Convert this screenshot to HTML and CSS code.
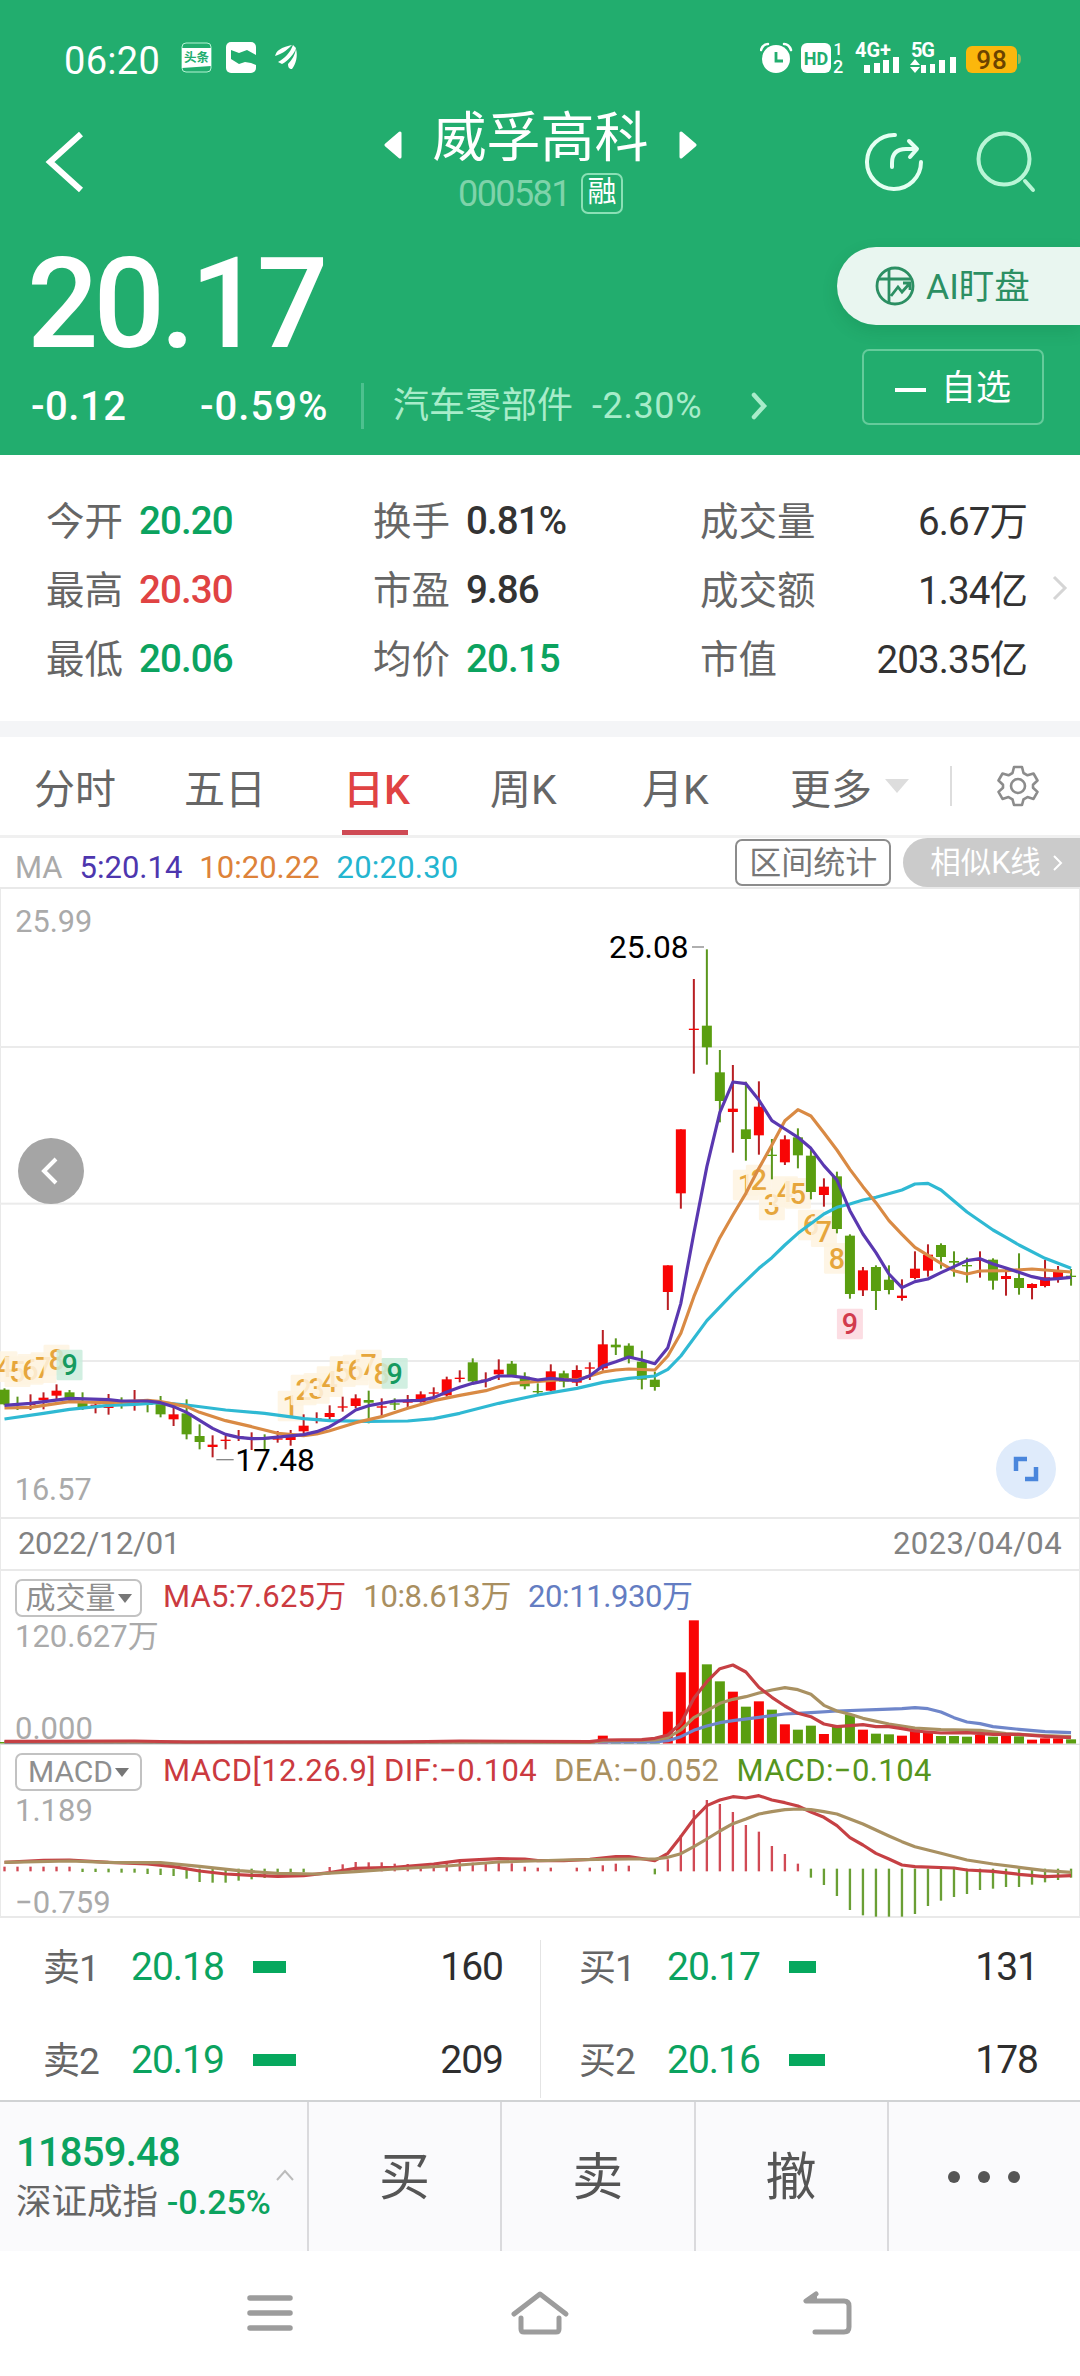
FILE: index.html
```html
<!DOCTYPE html>
<html lang="zh-CN">
  <head>
    <meta charset="UTF-8" />
    <meta name="viewport" content="width=device-width, initial-scale=1.0" />
    <title>威孚高科 000581</title>
    <link rel="stylesheet" href="styles.css">
    <script src="main.js" defer></script>
  </head>
  <body>
    <header class="header">
      <div class="status">
        <span class="clock">06:20</span>
        <svg class="status-left" width="120" height="32" viewBox="0 0 120 32" fill="#fff">
          <rect x="1" y="1" width="29" height="29" rx="4" fill="none" stroke="#b5f3d4" />
          <path d="M1 6H30V24L1 26Z" />
          <text x="15.5" y="20" font-size="12.500" font-weight="700" text-anchor="middle" fill="#22ad6e">头条</text>
          <rect x="45" y="0" width="30" height="31" rx="5" />
          <path d="M50 8l8 3 8-3 9 5v10l-5-2-6-1-6 2-8-5z" fill="#22ad6e" />
          <path d="M94 14c1-3 2-5 4-6 4-3 9-4 13-5-3 3-9 9-17 11zM97 20c7-4 12-9 15-17l3 3c-1 5-8 13-14 16zM107 22c4-4 7-9 8-15 2 7 0 15-4 20-3 0-4-2-4-5z" />
        </svg>
        <svg class="status-right" width="262" height="44" viewBox="0 -8 262 44" fill="#fff">
          <circle cx="16" cy="17" r="14" />
          <path d="M1 8Q3 2 8 2M31 8Q29 2 24 2" fill="none" stroke="#fff" stroke-width="2.5" stroke-linecap="round" />
          <path d="M16 10v9h7" fill="none" stroke="#22ad6e" stroke-width="2.8" />
          <rect x="41" y="1" width="30" height="30" rx="6" />
          <text x="56" y="23" font-size="18" font-weight="700" text-anchor="middle" fill="#22ad6e">HD</text>
          <text x="78" y="13" font-size="16" font-weight="500" text-anchor="middle">1</text>
          <text x="78" y="31" font-size="18" font-weight="500" text-anchor="middle">2</text>
          <text x="95" y="15" font-size="20" font-weight="700" textLength="36">4G+</text>
          <path d="M104 23h6v8h-6zM114 21h6v10h-6zM123 18h6v13h-6zM133 15h6v16h-6z" />
          <text x="151" y="15" font-size="20" font-weight="700" textLength="24">5G</text>
          <path d="M155 17l5 6h-10zM155 31l5-6h-10zM161 23h5v8h-5zM170 22h5v9h-5zM179 18h6v13h-6zM190 15h6v16h-6z" />
          <rect x="206" y="4" width="51" height="27" rx="6" fill="#fbb70c" />
          <path d="M258 12q3 0 3 5t-3 5z" fill="#8fb95a" />
          <text x="232" y="27" font-size="26" font-weight="500" text-anchor="middle" letter-spacing="1" fill="#6b4300">98</text>
        </svg>
      </div>

      <div class="title-bar">
        <svg width="40" height="64" viewBox="0 0 40 64">
          <path d="M36 4L5 32l31 28" fill="none" stroke="#fff" stroke-width="6" />
        </svg>
        <div class="title">
          <svg width="18" height="28" viewBox="0 0 18 28"><path d="M16 2v24L2 14z" fill="#fff" stroke="#fff" stroke-width="3" stroke-linejoin="round" /></svg>
          <div class="stock">
            <h1>威孚高科</h1>
            <p><span class="code">000581</span><span class="margin-tag">融</span></p>
          </div>
          <svg width="18" height="28" viewBox="0 0 18 28"><path d="M2 2v24l14-12z" fill="#fff" stroke="#fff" stroke-width="3" stroke-linejoin="round" /></svg>
        </div>
        <svg width="172" height="62" viewBox="0 0 172 62" fill="none" stroke="#e4fff2" stroke-width="4" stroke-linecap="round">
          <path d="M30 4A27 27 0 1 0 56 31" />
          <path d="M27 36V32Q27 18 41 18h9M44 10l8 8-7 8" stroke-linejoin="round" />
          <circle cx="139" cy="28" r="25.500" stroke="#b9f5d6" />
          <path d="M160 50l8 9" stroke="#b9f5d6" />
        </svg>
      </div>

      <div class="quote">
        <div>
          <div class="price">20.17</div>
          <div class="change">
            <span class="diff">-0.12</span>
            <span class="pct">-0.59%</span>
            <span class="industry">汽车零部件</span>
            <span class="industry-pct">-2.30%</span>
            <svg width="18" height="28" viewBox="0 0 18 28"><path d="M4 3l10 11L4 25" fill="none" stroke="#a8ecca" stroke-width="4.500" stroke-linecap="round" /></svg>
          </div>
        </div>
        <div class="actions">
          <button class="ai">
            <svg width="40" height="40" viewBox="0 0 40 40" fill="none" stroke="#2c8f63" stroke-width="2.800">
              <circle cx="20" cy="20" r="18" />
              <path d="M14 3v33M3 13h34M16 30l7-9 4 5 8-9M28 17h7v7" />
            </svg>
            <span>AI盯盘</span>
          </button>
          <button class="watch"><i></i><span>自选</span></button>
        </div>
      </div>
    </header>

    <section class="stats">
      <dl>
        <div><dt>今开</dt><dd class="down">20.20</dd></div>
        <div><dt>最高</dt><dd class="up">20.30</dd></div>
        <div><dt>最低</dt><dd class="down">20.06</dd></div>
      </dl>
      <dl>
        <div><dt>换手</dt><dd>0.81%</dd></div>
        <div><dt>市盈</dt><dd>9.86</dd></div>
        <div><dt>均价</dt><dd class="down">20.15</dd></div>
      </dl>
      <dl class="wide">
        <div><dt>成交量</dt><dd>6.67万</dd></div>
        <div><dt>成交额</dt><dd>1.34亿</dd></div>
        <div><dt>市值</dt><dd>203.35亿</dd></div>
      </dl>
      <svg width="16" height="26" viewBox="0 0 16 26"><path d="M2 2l11 11L2 24" fill="none" stroke="#d5d5d5" stroke-width="3" /></svg>
    </section>

    <nav class="tabs">
      <a>分时</a>
      <a>五日</a>
      <a class="active">日K</a>
      <a>周K</a>
      <a>月K</a>
      <a class="more">更多</a>
      <svg class="gear" width="42" height="42" viewBox="0 0 42 42" fill="none" stroke="#8c8c8c" stroke-width="2.600" stroke-linejoin="round">
        <path d="M17 2h8l1.500 6 4 2.300 6-1.800 4 7-4.500 4.200v3l4.500 4.200-4 7-6-1.800-4 2.300L25 40h-8l-1.500-5.600-4-2.300-6 1.800-4-7L6 22.700v-3l-4.500-4.200 4-7 6 1.800 4-2.300z" />
        <circle cx="21" cy="21" r="7" />
      </svg>
    </nav>

    <div class="ma-row">
      <span class="legend">
        <span class="muted">MA</span>
        <span class="ma5">5:20.14</span>
        <span class="ma10">10:20.22</span>
        <span class="ma20">20:20.30</span>
      </span>
      <button class="range">区间统计</button>
      <button class="similar">相似K线
        <svg width="10" height="18" viewBox="0 0 10 18"><path d="M1 2l7 7-7 7" fill="none" stroke="#fff" stroke-width="2" /></svg>
      </button>
    </div>

    <div class="kline">
      <!-- three chart units per css pixel -->
      <svg id="kline" width="1080" height="628" viewBox="0 -33 3240 1884"></svg>
      <svg class="prev" width="66" height="66" viewBox="0 0 66 66">
        <circle cx="33" cy="33" r="33" fill="#a5a5a5" />
        <path d="M38 21L26 33l12 12" fill="none" stroke="#fff" stroke-width="4" />
      </svg>
      <svg class="expand" width="60" height="60" viewBox="0 0 60 60" fill="none">
        <circle cx="30" cy="30" r="30" fill="#dfebfb" />
        <path d="M20 32V20h11M40 28v12H29" stroke="#4a86dc" stroke-width="4.500" />
      </svg>
    </div>

    <div class="dates"><span>2022/12/01</span><span>2023/04/04</span></div>

    <div class="panel volume">
      <div class="legend">
        <span class="picker">成交量<i></i></span>
        <span class="red">MA5:7.625万</span>
        <span class="tan">10:8.613万</span>
        <span class="blue">20:11.930万</span>
      </div>
      <span class="axis">120.627万</span>
      <span class="axis low">0.000</span>
      <svg id="volume" width="1080" height="174" viewBox="0 153 3240 522"></svg>
    </div>

    <div class="panel macd">
      <div class="legend">
        <span class="picker">MACD<i></i></span>
        <span class="red">MACD[12.26.9] DIF:−0.104</span>
        <span class="tan">DEA:−0.052</span>
        <span class="green">MACD:−0.104</span>
      </div>
      <span class="axis">1.189</span>
      <span class="axis low">−0.759</span>
      <svg id="macd" width="1080" height="173" viewBox="0 675 3240 519"></svg>
    </div>

    <section class="orders">
      <ul>
        <li><span>卖1</span><b>20.18</b><i style="width: 33px"></i><em>160</em></li>
        <li><span>卖2</span><b>20.19</b><i style="width: 43px"></i><em>209</em></li>
      </ul>
      <ul>
        <li><span>买1</span><b>20.17</b><i style="width: 27px"></i><em>131</em></li>
        <li><span>买2</span><b>20.16</b><i style="width: 36px"></i><em>178</em></li>
      </ul>
    </section>

    <footer class="trade">
      <div class="index">
        <strong>11859.48</strong>
        <p>深证成指 <b>-0.25%</b></p>
        <svg width="20" height="14" viewBox="0 0 20 14"><path d="M2 12l8-9 8 9" fill="none" stroke="#bbb" stroke-width="2" /></svg>
      </div>
      <button>买</button>
      <button>卖</button>
      <button>撤</button>
      <button class="dots"><i></i><i></i><i></i></button>
    </footer>

    <nav class="system" aria-label="system">
      <svg width="46" height="38" viewBox="0 0 46 38" stroke="#9c9c9c" stroke-width="5.500" stroke-linecap="round">
        <path d="M3 4h40M3 19h40M3 34h40" />
      </svg>
      <svg width="60" height="46" viewBox="0 0 60 46" fill="none" stroke="#9c9c9c" stroke-width="5" stroke-linecap="round" stroke-linejoin="round">
        <path d="M4 24L30 4l26 20M11 28v11q0 3 3 3h32q3 0 3-3V28" />
      </svg>
      <svg width="52" height="46" viewBox="0 0 52 46" fill="none" stroke="#9c9c9c" stroke-width="5" stroke-linecap="round" stroke-linejoin="round">
        <path d="M15 4L5 11h38q5 0 5 5v21q0 5-5 5H14" />
        <path d="M15 4v7H5z" fill="#9c9c9c" stroke-width="2" />
      </svg>
    </nav>
  </body>
</html>
```
FILE: styles.css
```css
:root {
  --green: #22ad6e;
  --down: #0ba35f;
  --up: #e04343;
  --line: #e9e9e9;
  font-family: Roboto, "Noto Sans CJK SC", sans-serif;
}

* {
  box-sizing: border-box;
}

body,
h1,
p,
dl,
dd,
ul {
  margin: 0;
  padding: 0;
}

body {
  width: 1080px;
  height: 2376px;
  background: #fff;
  color: #666;
  overflow: hidden;
}

svg {
  display: block;
  flex: none;
}

button {
  font-family: inherit;
  margin: 0;
  padding: 0;
  border: 0;
  background: none;
  color: inherit;
}

/* header */

.header {
  height: 455px;
  background: var(--green);
  color: #fff;
}

.status {
  display: flex;
  height: 112px;
  padding: 42px 58px 0 64px;
}

.clock {
  width: 117px;
  font-size: 38px;
  line-height: 38px;
  letter-spacing: 0.3px;
}

.status-right {
  margin: -8px 0 0 auto;
}

.title-bar {
  display: flex;
  align-items: flex-start;
  height: 128px;
  padding: 0 43px 0 45px;
}

.title-bar > svg:first-child {
  margin-top: 18px;
}

.title-bar > svg:last-child {
  margin-top: 19px;
  margin-left: auto;
}

.title {
  display: flex;
  margin-left: 299px;
}

.title > svg {
  margin-top: 19px;
}

.stock {
  width: 277px;
  text-align: center;
}

h1 {
  font-size: 54px;
  font-weight: 400;
  line-height: 54px;
}

.stock p {
  display: flex;
  align-items: center;
  justify-content: center;
  gap: 11px;
  margin-top: 7px;
}

.code {
  color: #7fd3aa;
  font-size: 36px;
  line-height: 40px;
  letter-spacing: -1.6px;
}

.margin-tag {
  width: 42px;
  height: 41px;
  border: 2px solid #8be0b6;
  border-radius: 7px;
  font-size: 29px;
  line-height: 35px;
}

.quote {
  display: flex;
  justify-content: space-between;
}

.price {
  padding-left: 27px;
  height: 120px;
  font-size: 126px;
  font-weight: 500;
  line-height: 129px;
  letter-spacing: -5px;
}

.change {
  display: flex;
  align-items: center;
  height: 92px;
  padding-left: 31px;
  font-size: 40px;
}

.diff {
  width: 169px;
  font-weight: 500;
  letter-spacing: 0.5px;
}

.pct {
  width: 161px;
  font-weight: 500;
  letter-spacing: 1px;
}

.industry {
  padding-left: 29px;
  border-left: 3px solid #4dc18f;
  color: #a8ecca;
  font-size: 36px;
  line-height: 46px;
}

.industry-pct {
  width: 158px;
  margin-left: 19px;
  color: #a8ecca;
  font-size: 36px;
  letter-spacing: 0.6px;
}

.actions {
  width: 243px;
  padding-top: 7px;
}

.ai {
  display: flex;
  align-items: center;
  gap: 11px;
  width: 243px;
  height: 78px;
  padding-left: 38px;
  border-radius: 39px 0 0 39px;
  background: #e9f6f0;
  box-shadow: 0 6px 16px rgba(0, 80, 40, 0.15);
  color: #2c8f63;
  font-size: 35.5px;
}

.ai span,
.watch span {
  padding-bottom: 5px;
}

.watch {
  display: flex;
  align-items: center;
  justify-content: center;
  gap: 15px;
  width: 182px;
  height: 76px;
  margin: 24px 0 0 25px;
  border: 2px solid #65cb9b;
  border-radius: 7px;
  font-size: 35px;
}

.watch i {
  width: 31px;
  height: 4px;
  margin-top: 6px;
  background: #fff;
}

/* key figures */

.stats {
  display: flex;
  height: 282px;
  padding: 31px 0 0 46px;
  border-bottom: 16px solid #f4f5f7;
}

.stats dl {
  width: 327px;
}

.stats dl > div {
  display: flex;
  align-items: center;
  height: 69px;
}

.stats dt {
  padding-bottom: 5px;
  font-size: 38.5px;
}

.stats dd {
  margin-left: 16px;
  color: #333;
  font-size: 38.5px;
  font-weight: 500;
  letter-spacing: -0.9px;
}

.stats .wide dd {
  margin-left: auto;
  padding-bottom: 5px;
  font-weight: 400;
}

.stats dd.down {
  color: var(--down);
}

.stats dd.up {
  color: var(--up);
}

.stats > svg {
  margin: 89px 0 0 25px;
}

/* period tabs */

.tabs {
  display: flex;
  align-items: center;
  height: 101px;
  padding-left: 34px;
  font-size: 41px;
  border-bottom: 3px solid #f0f0f0;
}

.tabs a {
  display: flex;
  align-items: center;
  width: 150px;
  height: 98px;
  white-space: nowrap;
}

.tabs .active {
  width: 66px;
  margin: 0 82px 0 8px;
  border-bottom: 5px solid #cf4a54;
  padding: 5px 0 0 1px;
  color: var(--up);
  font-weight: 500;
}

.tabs a:nth-child(4) {
  width: 152px;
}

.tabs .more {
  width: 162px;
  height: 40px;
  border-right: 2px solid #ddd;
  margin-left: -2px;
}

.more::after {
  content: "";
  margin-left: 13px;
  border: 12px solid transparent;
  border-top: 14px solid #ddd;
  border-bottom: 0;
}

.gear {
  margin-left: 45px;
}

/* candles */

.ma-row {
  display: flex;
  align-items: center;
  height: 51px;
  border-bottom: 2px solid var(--line);
}

.legend {
  display: flex;
  font-size: 31px;
  line-height: 51px;
}

.ma-row .legend {
  width: 736px;
  gap: 17px;
  padding: 9px 0 0 15px;
}

.muted {
  color: #aaa;
}

.ma5 {
  color: #4d36ae;
}

.ma10 {
  color: #dd8239;
}

.ma20 {
  color: #24b5d0;
  letter-spacing: 0.2px;
}

.range {
  width: 156px;
  height: 47px;
  border: 2px solid #8c8c8c;
  border-radius: 7px;
  font-size: 32px;
  line-height: 42px;
  color: #777;
}

.similar {
  display: flex;
  align-items: center;
  gap: 12px;
  width: 177px;
  height: 49px;
  margin-left: 12px;
  padding-left: 27px;
  border-radius: 25px 0 0 25px;
  background: #cbcbcb;
  color: #fff;
  font-size: 30.5px;
  line-height: 40px;
  white-space: nowrap;
}

.kline,
.panel {
  position: relative;
  border-left: 1px solid var(--line);
  border-right: 1px solid var(--line);
}

.kline > svg:first-child,
.panel > svg {
  margin: 0 -1px;
}

.prev {
  position: absolute;
  left: 17px;
  top: 249px;
}

.expand {
  position: absolute;
  left: 995px;
  top: 550px;
}

.dates {
  display: flex;
  justify-content: space-between;
  height: 54px;
  padding: 0 17px;
  border: 1px solid var(--line);
  border-width: 2px 1px;
  color: #828282;
  font-size: 31px;
  line-height: 50px;
  letter-spacing: -0.3px;
}

.dates span:last-child {
  letter-spacing: 0.4px;
}

/* volume and MACD */

.panel {
  height: 174px;
}

.macd {
  height: 173px;
  border-bottom: 2px solid var(--line);
}

.panel > svg {
  position: absolute;
  top: 0;
  left: 0;
}

.panel .legend {
  gap: 17px;
  padding-left: 14px;
  height: 50px;
}

.volume .red {
  letter-spacing: 0.2px;
}

.volume .tan,
.volume .blue {
  letter-spacing: -0.4px;
}

.macd .legend {
  letter-spacing: 0.4px;
}

.picker {
  display: flex;
  align-items: center;
  justify-content: center;
  gap: 2px;
  width: 127px;
  height: 38px;
  margin: 8px 4px 0 0;
  border: 2px solid #c2c2c2;
  border-radius: 7px;
  color: #8f8f8f;
  font-size: 30px;
  line-height: 34px;
  letter-spacing: 0;
}

.picker i {
  border: 7px solid transparent;
  border-top: 9px solid #777;
  border-bottom: 0;
}

.red {
  color: #cb3a40;
}

.tan {
  color: #a98f60;
}

.blue {
  color: #647dc2;
}

.green {
  color: #56951d;
}

.axis {
  display: block;
  padding-left: 14px;
  color: #aaa;
  font-size: 31px;
  line-height: 31px;
}

.low {
  margin-top: 61px;
}

/* order book */

.orders {
  display: flex;
  height: 182px;
}

.orders ul {
  width: 540px;
  height: 158px;
  margin-top: 22px;
  padding-left: 43px;
  list-style: none;
}

.orders ul + ul {
  border-left: 1px solid #e4e4e4;
  padding-left: 38px;
}

.orders li {
  display: flex;
  align-items: center;
  height: 54px;
  margin-bottom: 39px;
  font-size: 37px;
  letter-spacing: -1px;
}

.orders span {
  width: 88px;
  padding-bottom: 5px;
}

.orders b {
  width: 122px;
  color: var(--down);
  font-size: 39px;
  font-weight: 400;
}

.orders i {
  height: 12px;
  background: #06a85e;
}

.orders em {
  margin: 0 37px 0 auto;
  color: #2e2e2e;
  font-size: 39px;
  font-style: normal;
}

.orders ul + ul em {
  margin-right: 42px;
}

/* trade bar */

.trade {
  display: flex;
  height: 151px;
  border-top: 2px solid #d0d2d4;
  background: #fafafc;
}

.index {
  position: relative;
  width: 307px;
  padding: 29px 0 0 16px;
}

.index strong {
  display: block;
  color: var(--down);
  font-size: 40px;
  font-weight: 500;
  line-height: 44px;
  letter-spacing: -0.8px;
}

.index p {
  font-size: 35.5px;
  line-height: 54px;
  white-space: nowrap;
}

.index b {
  color: var(--down);
  font-size: 34px;
  font-weight: 500;
}

.index svg {
  position: absolute;
  left: 275px;
  top: 66px;
}

.trade button {
  flex: 1;
  padding-bottom: 8px;
  border-left: 2px solid #dadadd;
  color: #555;
  font-size: 51px;
}

.trade .dots {
  display: flex;
  align-items: center;
  justify-content: center;
  gap: 18px;
  padding: 0;
}

.dots i {
  width: 12px;
  height: 12px;
  border-radius: 50%;
  background: #555;
}

.system {
  display: flex;
  align-items: center;
  gap: 231px;
  height: 126px;
  padding: 0 0 2px 247px;
}

.system svg:first-child {
  margin-right: -14px;
}
```
FILE: main.js
```js
const NS = "http://www.w3.org/2000/svg";
const RED = "#f90505";
const GREEN = "#5a9e10";

// one row per trading day: colour, high, low, body top, body bottom
const candles = `
g 1465 1516 1469 1513|g 1490 1530 1511 1513|r 1483 1530 1511 1513|r 1477 1528 1493 1501
r 1453 1500 1472 1487|g 1470 1502 1477 1495|g 1477 1530 1505 1523|r 1505 1540 1514 1517
r 1482 1544 1516 1524|g 1492 1526 1506 1508|r 1470 1532 1504 1507|g 1500 1537 1511 1513
g 1488 1552 1512 1543|r 1522 1578 1543 1558|g 1498 1618 1540 1603|g 1573 1648 1608 1626
r 1606 1672 1634 1641|r 1608 1648 1619 1622|r 1590 1623 1609 1612|r 1597 1650 1614 1617
g 1603 1652 1614 1616|r 1593 1628 1615 1619|r 1590 1637 1608 1620|r 1543 1610 1577 1594
r 1537 1570 1555 1558|r 1516 1560 1539 1551|r 1490 1535 1519 1523|r 1483 1525 1495 1518
g 1472 1570 1500 1508|r 1495 1550 1519 1521|g 1495 1530 1510 1512|r 1485 1525 1504 1507
r 1474 1508 1483 1506|r 1462 1495 1477 1480|r 1430 1490 1438 1486|r 1411 1447 1433 1436
g 1375 1447 1387 1444|r 1417 1462 1439 1441|r 1378 1440 1409 1423|g 1383 1430 1391 1426
g 1417 1468 1430 1459|g 1450 1485 1473 1476|r 1393 1474 1414 1472|g 1412 1462 1420 1445
r 1396 1458 1410 1448|r 1387 1440 1402 1405|r 1290 1412 1333 1405|g 1315 1365 1334 1342
g 1330 1390 1337 1372|g 1352 1468 1385 1439|g 1415 1472 1439 1461|r 1096 1230 1096 1176
r 688 926 688 880|r 237 521 386 389|g 148 494 377 442|g 450 667 517 603
r 495 758 626 636|g 545 782 688 717|r 544 764 620 706|g 717 838 764 767
r 706 795 718 787|g 685 805 712 766|g 742 898 767 876|r 835 920 860 885
g 815 1000 829 987|g 1003 1196 1007 1182|r 1101 1188 1111 1171|g 1096 1230 1101 1173
g 1096 1183 1139 1170|r 1138 1202 1187 1194|r 1054 1138 1106 1134|r 1033 1130 1064 1112
g 1030 1106 1035 1071|g 1054 1130 1083 1088|g 1073 1148 1095 1098|r 1054 1133 1079 1083
g 1075 1169 1079 1142|r 1105 1187 1128 1137|g 1060 1184 1134 1164|r 1150 1198 1152 1164
r 1080 1162 1132 1158|r 1098 1148 1116 1135|g 1107 1157 1127 1130`
  .trim()
  .split(/[|\n]/)
  .map((row) => row.split(" "));

// lines are "day:y" pairs
const ma5 =
  "0:1516 2:1510 5:1495 8:1499 9:1503 11:1503 12:1508 13:1520 14:1537 16:1585 17:1603 18:1612 19:1616 20:1615 23:1604 24:1595 25:1580 26:1557 27:1530 28:1517 30:1503 32:1501 33:1493 34:1476 35:1462 36:1450 37:1442 38:1428 39:1428 40:1433 41:1440 42:1435 43:1439 44:1442 45:1427 46:1398 47:1385 48:1371 49:1380 50:1391 51:1343 52:1210 53:1000 54:800 55:637 56:546 57:551 58:600 59:662 60:687 61:712 62:745 63:797 64:840 65:932 66:1002 67:1058 68:1122 69:1163 70:1145 71:1137 72:1118 73:1100 74:1082 75:1076 76:1092 77:1104 78:1117 79:1130 80:1138 81:1136 82:1132";
const ma10 =
  "0:1524 2:1522 5:1505 8:1508 11:1501 12:1505 14:1520 15:1537 17:1562 19:1580 21:1600 23:1607 24:1602 25:1592 27:1568 29:1550 31:1525 33:1502 35:1486 37:1472 38:1460 39:1450 41:1444 43:1438 44:1440 45:1428 46:1416 47:1410 48:1407 50:1410 51:1368 52:1300 53:1190 54:1095 55:1013 56:945 57:880 58:805 59:735 60:662 61:629 62:648 63:698 64:750 65:808 66:860 67:908 68:962 69:1003 70:1042 71:1066 72:1090 73:1112 74:1122 75:1113 77:1112 79:1107 80:1110 82:1116";
const ma20 =
  "0:1557 3:1540 5:1528 8:1516 10:1513 12:1508 14:1515 17:1530 20:1540 23:1556 25:1562 28:1564 31:1563 33:1556 35:1540 38:1510 41:1485 44:1465 46:1447 48:1435 50:1428 51:1408 52:1368 54:1262 56:1180 58:1105 59:1073 60:1035 61:1000 63:942 64:922 65:912 66:900 67:892 69:870 70:852 71:850 72:870 73:903 74:936 76:990 77:1012 78:1035 80:1075 81:1090 82:1105";

// TD sequence marks: day, digit, y centre
const marks = [
  [0, 4, 1400], [1, 5, 1415], [2, 6, 1408], [3, 7, 1403], [4, 8, 1380], [5, 9, 1395, "#159a5f", "#c9ecdc"],
  [22, 1, 1518], [23, 2, 1470], [24, 3, 1465], [25, 4, 1445], [26, 5, 1415], [27, 6, 1410], [28, 7, 1395], [29, 8, 1420], [30, 9, 1420, "#159a5f", "#c9ecdc"],
  [57, 1, 855], [58, 2, 840], [59, 3, 915], [60, 4, 875], [61, 5, 880], [62, 6, 975], [63, 7, 995], [64, 8, 1075], [65, 9, 1272, "#d23b4d", "#fcd7de"],
];

// bar tops from day 51 on
const volume = [
  575, 457, 301, 433, 484, 515, 560, 544, 569, 613, 629, 617, 642, 618, 583, 629, 641, 643, 647, 628, 637, 648, 648,
  650, 645, 650, 645, 649, 659, 655, 655, 658,
];
const vol5 =
  "0:664 10:663 14:666 24:666 30:666 35:663 45:665 46:660 49:659 50:655 51:645 52:610 53:535 54:485 55:446 56:435 57:456 58:502 59:532 60:558 61:580 62:590 63:612 64:620 65:617 66:614 67:620 68:620 69:626 70:633 72:639 74:638 76:643 78:643 80:649 82:653";
const vol10 =
  "0:666 45:667 46:663 50:660 51:653 52:630 53:593 54:572 55:550 56:538 57:530 58:519 59:510 60:503 61:509 62:523 63:556 64:573 65:583 66:595 68:612 70:624 72:629 75:631 77:641 79:645 82:650";
const vol20 =
  "0:667 50:666 51:662 52:650 53:631 54:618 55:608 56:602 58:592 60:582 62:578 64:573 67:569 69:566 70:563 71:566 72:576 73:593 74:606 75:611 76:620 78:628 80:635 82:638";

// null leaves the day empty
const macd = [
  1040, 1040, 1040, 1040, 1040, 1040, 1056, 1056, 1057, 1058, 1058, 1062, 1065, 1068, 1076, 1086, 1088, 1088, 1082,
  1078, 1074, 1062, 1060, 1057, null, 1041, 1033, 1026, 1027, 1027, 1031, 1032, 1033, 1033, 1028, 1026, 1028, 1028,
  1028, 1030, 1040, 1043, 1043, null, 1043, 1043, 1036, 1031, 1037, null, 1063, 1018, 945, 870, 840, 852, 876, 915,
  935, 978, 1002, 1031, 1073, 1095, 1128, 1170, 1186, 1190, 1190, 1190, 1182, 1158, 1142, 1131, 1122, 1110, 1106, 1101,
  1101, 1094, 1087, 1080, 1073,
];
const dif =
  "0:1027 3:1021 5:1020 8:1027 11:1032 13:1040 15:1053 17:1062 19:1066 21:1069 23:1067 25:1058 27:1045 30:1042 33:1032 35:1022 38:1016 40:1017 41:1022 43:1022 45:1018 47:1010 48:1010 50:1022 51:1000 52:950 53:897 54:857 55:840 56:830 57:834 58:827 59:840 60:848 61:858 62:876 63:892 64:917 65:953 66:975 67:1000 68:1017 69:1035 70:1040 73:1044 74:1050 76:1054 78:1063 80:1070 82:1067";
const dea =
  "0:1027 5:1023 8:1027 12:1028 15:1039 18:1052 21:1060 24:1062 27:1055 30:1047 34:1038 38:1026 43:1020 48:1017 50:1017 51:1012 52:1001 53:980 54:957 55:933 56:911 57:897 58:882 59:875 60:869 61:867 62:869 63:875 64:882 65:897 66:912 67:930 68:948 69:965 70:980 72:1000 74:1020 76:1032 78:1042 80:1052 82:1057";

const dayX = (i) => 13.5 + 39.02 * i;

function add(svg, tag, attrs, text) {
  const el = document.createElementNS(NS, tag);
  for (const key in attrs) el.setAttribute(key, attrs[key]);
  if (text !== undefined) el.textContent = text;
  svg.appendChild(el);
}

function rect(svg, x, y, width, height, fill) {
  add(svg, "rect", { x, y, width, height, fill });
}

function line(svg, pairs, stroke) {
  const points = pairs.split(" ").map((pair) => {
    const [day, y] = pair.split(":");
    return `${dayX(+day)},${y}`;
  });
  add(svg, "polyline", {
    points: points.join(" "),
    fill: "none",
    stroke,
    "stroke-width": 9.5,
    "stroke-linejoin": "round",
  });
}

function label(svg, x, y, text, fill, size = 92) {
  add(svg, "text", { x, y, fill, "font-size": size }, text);
}

function drawKline() {
  const svg = document.getElementById("kline");
  for (const y of [438, 908, 1380]) rect(svg, 0, y, 3240, 6, "#ebebeb");

  for (const [day, digit, y, color = "#e6a63c", bg = "#fef3e1"] of marks) {
    const x = dayX(day);
    add(svg, "rect", { x: x - 39, y: y - 46, width: 78, height: 92, rx: 4, fill: bg, "fill-opacity": 0.85 });
    add(svg, "text", { x, y: y + 31, fill: color, "font-size": 86, "font-weight": 500, "text-anchor": "middle" }, digit);
  }

  candles.forEach(([dir, high, low, top, bottom], i) => {
    const x = dayX(i);
    const up = dir === "r";
    rect(svg, x - 3, high, 6, low - high, up ? "#b81f24" : "#5a961c");
    rect(svg, x - 15, top, 30, Math.max(bottom - top, 4), up ? RED : GREEN);
  });

  line(svg, ma20, "#2fb9d3");
  line(svg, ma10, "#d98a44");
  line(svg, ma5, "#5a38b0");

  label(svg, 46, 96, "25.99", "#aaa");
  label(svg, 44, 1800, "16.57", "#aaa");
  label(svg, 1827, 174, "25.08", "#000", 95);
  label(svg, 706, 1713, "17.48", "#000", 95);
  rect(svg, 2076, 139, 36, 4, "#888");
  rect(svg, 649, 1677, 52, 4, "#888");
}

function drawVolume() {
  const svg = document.getElementById("volume");
  candles.forEach(([dir], i) => {
    const top = i === 46 ? 647 : i < 51 ? 666 : volume[i - 51];
    rect(svg, dayX(i) - 15, top, 30, 671 - top, dir === "r" ? RED : GREEN);
  });
  rect(svg, 0, 671, 3240, 5, "#ddd");
  line(svg, vol20, "#6f86ca");
  line(svg, vol10, "#a99162");
  line(svg, vol5, "#c64044");
}

function drawMacd() {
  const svg = document.getElementById("macd");
  macd.forEach((y, i) => {
    if (y === null) return;
    const up = y < 1048;
    rect(svg, dayX(i) - 3.5, up ? y : 1046, 7, up ? 1054 - y : y - 1046, up ? "#d14a55" : "#6a9f35");
  });
  line(svg, dif, "#c64044");
  line(svg, dea, "#a99162");
}

drawKline();
drawVolume();
drawMacd();
```
